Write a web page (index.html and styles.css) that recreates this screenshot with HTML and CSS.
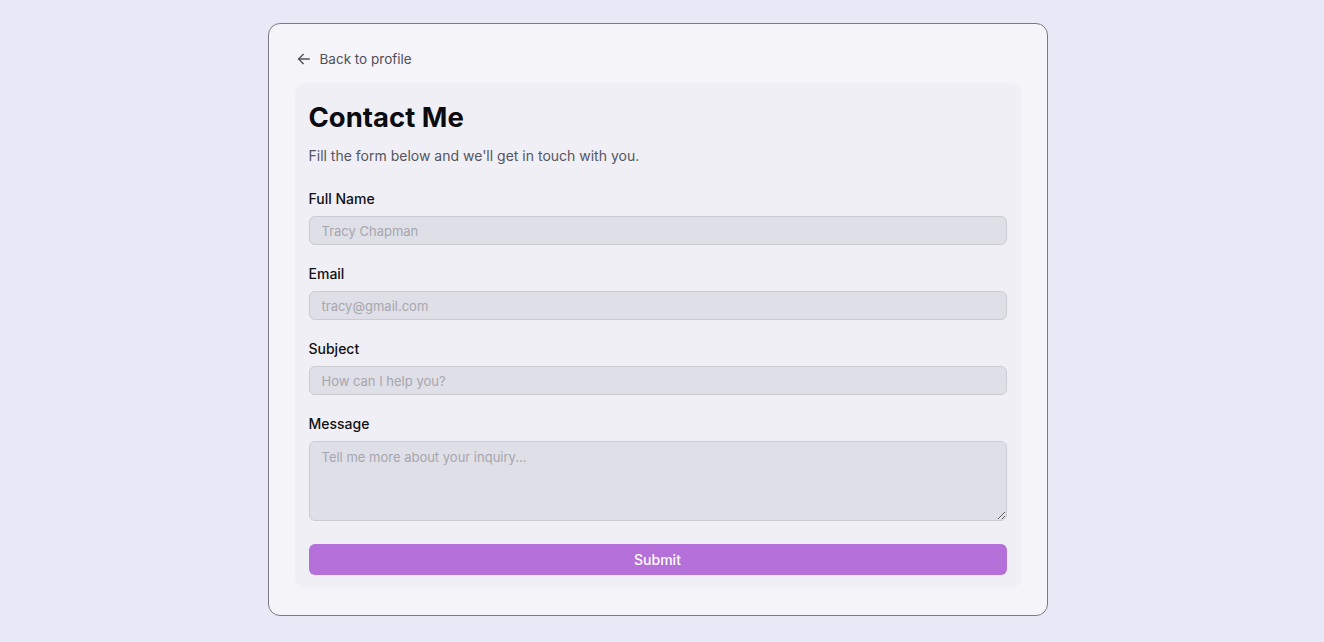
FILE: index.html
```html
<!DOCTYPE html>
<html lang="en">
<head>
<meta charset="utf-8">
<title>Contact Me</title>
<link rel="stylesheet" href="styles.css">
</head>
<body>
<main class="page">
  <section class="card">
    <a class="back-link" href="#">
      <svg class="back-icon" viewBox="0 0 24 24" width="16" height="16" fill="none" stroke="currentColor" stroke-width="2" stroke-linecap="round" stroke-linejoin="round"><line x1="20" y1="12" x2="4" y2="12"/><polyline points="11 19 4 12 11 5"/></svg>
      <span>Back to profile</span>
    </a>
    <div class="panel">
      <h1 class="title">Contact Me</h1>
      <p class="subtitle">Fill the form below and we'll get in touch with you.</p>
      <form class="form">
        <div class="field">
          <label class="label" for="name">Full Name</label>
          <input class="input" id="name" type="text" placeholder="Tracy Chapman">
        </div>
        <div class="field">
          <label class="label" for="email">Email</label>
          <input class="input" id="email" type="email" placeholder="tracy@gmail.com">
        </div>
        <div class="field">
          <label class="label" for="subject">Subject</label>
          <input class="input" id="subject" type="text" placeholder="How can I help you?">
        </div>
        <div class="field">
          <label class="label" for="message">Message</label>
          <textarea class="input textarea" id="message" placeholder="Tell me more about your inquiry..."></textarea>
        </div>
        <button class="submit" type="button">Submit</button>
      </form>
    </div>
  </section>
</main>
</body>
</html>
```

FILE: styles.css
```css
html {
  background: #e9e8f6;
}
body {
  margin: 0;
  font-family: Inter, "Noto Sans", "Liberation Sans", sans-serif;
  color: #111;
}
.page {
  display: flex;
  justify-content: center;
  padding: 23px 9px 27px 0;
}
.card {
  width: 780px;
  box-sizing: border-box;
  background: #f5f4f9;
  border: 1px solid #7a7a80;
  border-radius: 12px;
  padding: 25px 26px 27px;
  display: flex;
  flex-direction: column;
  gap: 14px;
}
.back-link {
  display: flex;
  align-items: center;
  gap: 8px;
  color: #50505a;
  text-decoration: none;
  font-size: 13.5px;
  line-height: 20px;
  padding-left: 1px;
}
.back-icon {
  display: block;
}
.panel {
  background: #f0eff6;
  border-radius: 10px;
  padding: 17px 14px 13px;
}
.title {
  margin: 0;
  font-size: 27.5px;
  line-height: 34px;
  font-weight: 700;
  color: #0b0b10;
  letter-spacing: 0;
}
.subtitle {
  margin: 12px 0 0;
  font-size: 14px;
  line-height: 20px;
  color: #55555e;
}
.form {
  margin-top: 23px;
  display: flex;
  flex-direction: column;
  gap: 19px;
}
.field {
  display: flex;
  flex-direction: column;
  gap: 7px;
}
.label {
  font-size: 14px;
  line-height: 20px;
  font-weight: 500;
  color: #111;
}
.input {
  box-sizing: border-box;
  width: 100%;
  height: 29px;
  margin: 0;
  padding: 0 12px;
  background: #dfdfe7;
  border: 1px solid #cbcbd2;
  border-radius: 6px;
  font-family: inherit;
  font-size: 13px;
  color: #111;
  outline: none;
}
.input::placeholder {
  color: #a6a6ae;
}
.textarea {
  height: 80px;
  padding: 7px 12px;
  resize: vertical;
  line-height: 16px;
}
.submit {
  margin-top: 4px;
  height: 31px;
  border: none;
  border-radius: 6px;
  background: #b46fd8;
  color: #fff;
  font-family: inherit;
  font-size: 14px;
  font-weight: 500;
}
```
